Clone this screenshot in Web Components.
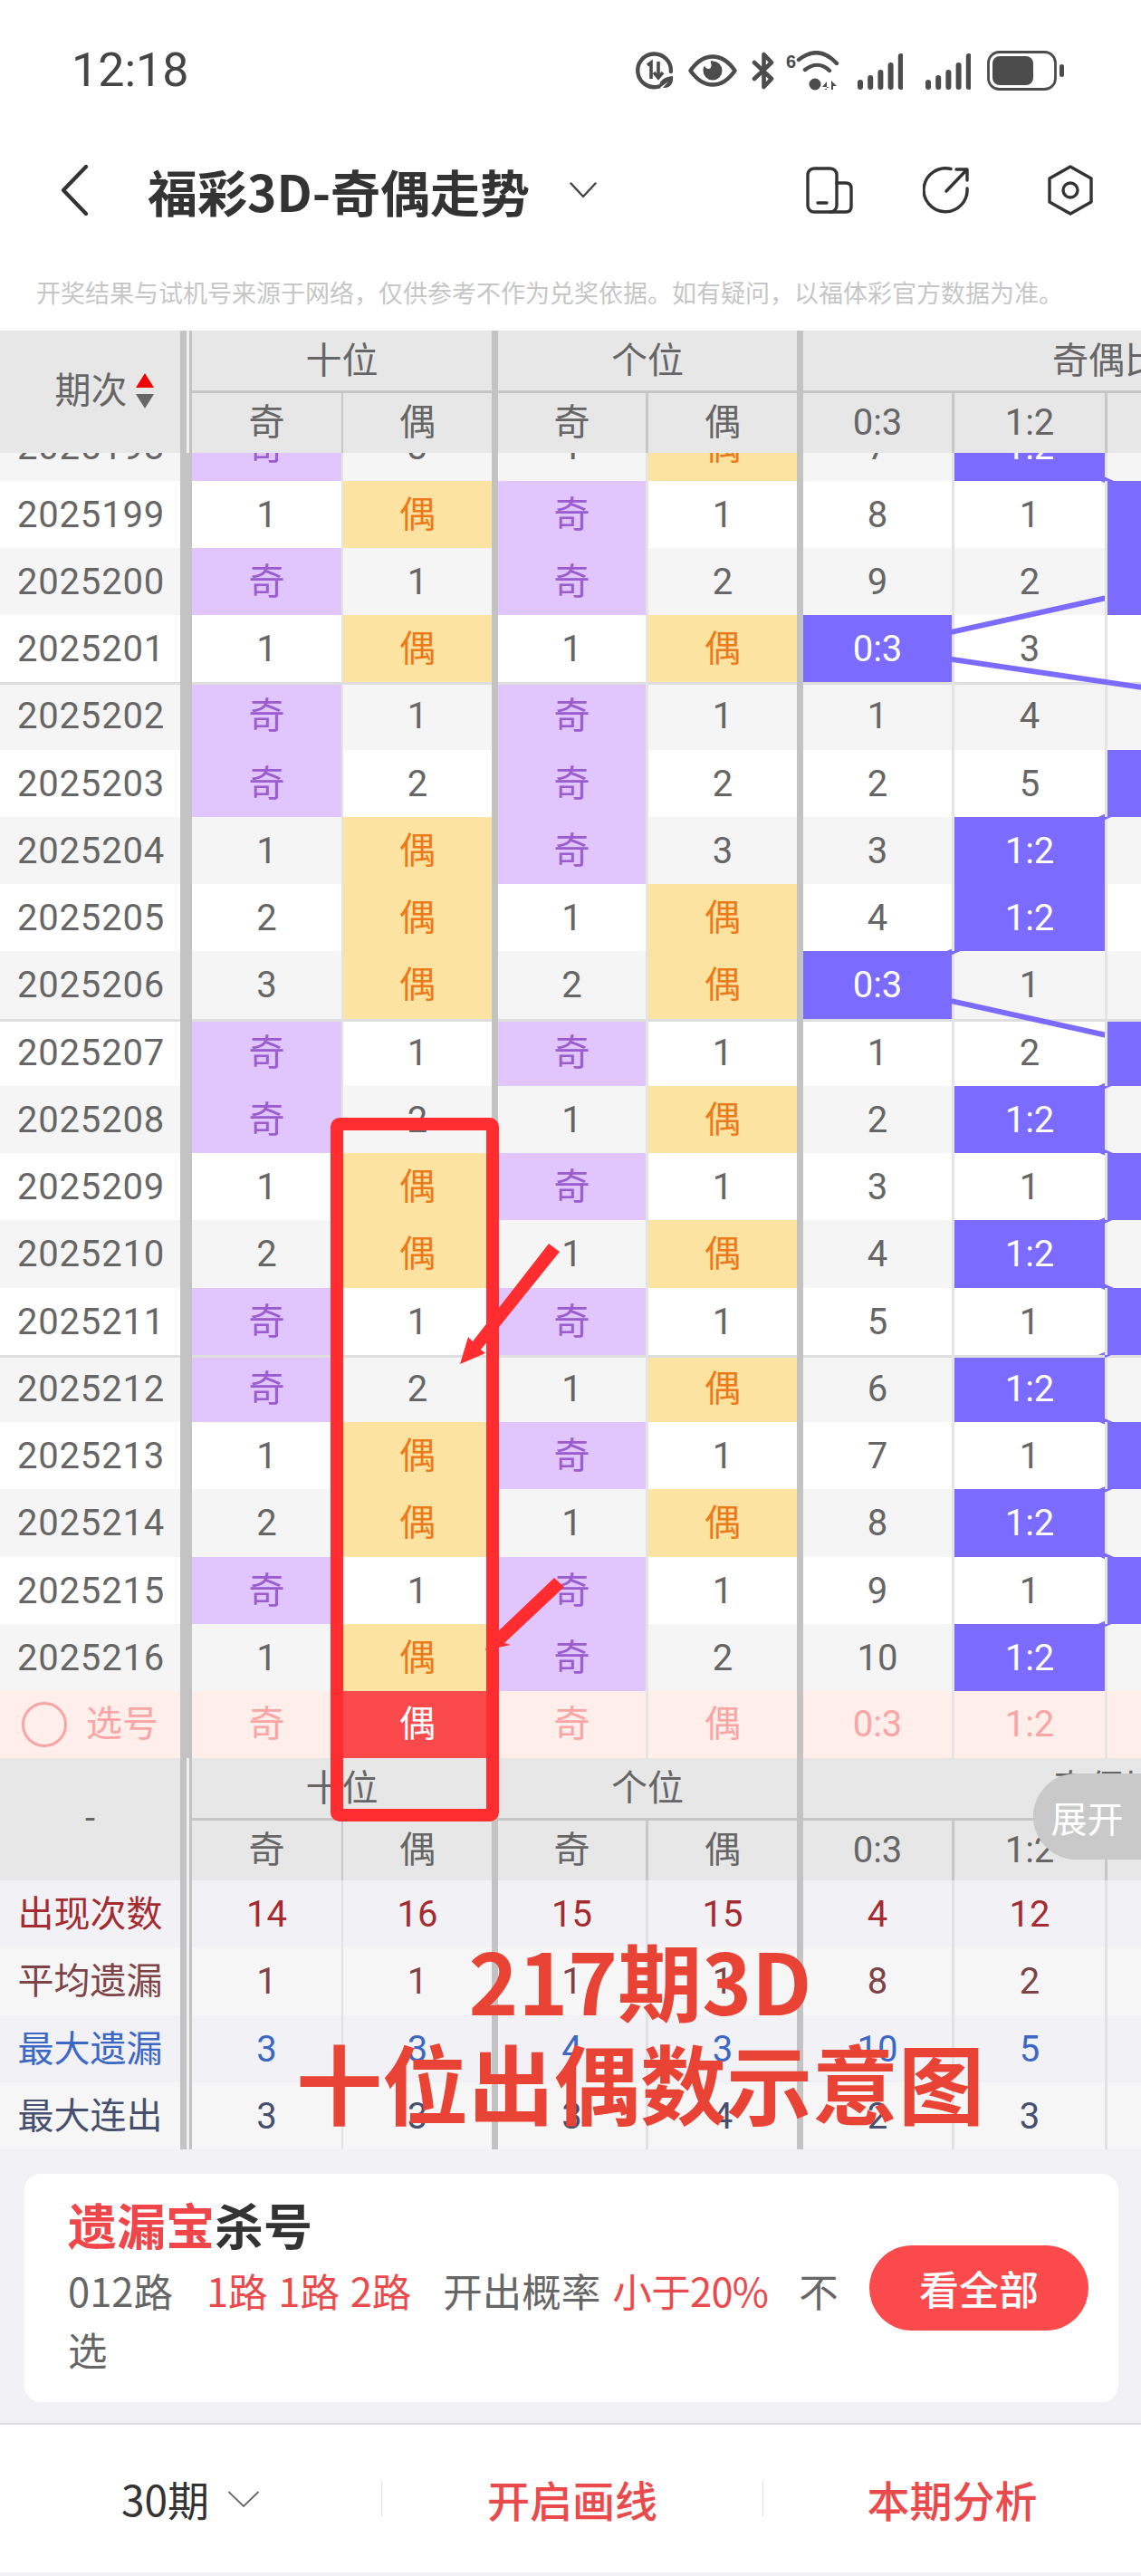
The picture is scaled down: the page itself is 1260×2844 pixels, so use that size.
<!DOCTYPE html>
<html lang="zh-CN">
<head>
<meta charset="utf-8">
<title>福彩3D-奇偶走势</title>
<style>
    html, body { margin: 0; padding: 0; }
    body {
        position: relative;
        width: 1260px;
        height: 2844px;
        overflow: hidden;
        background: #f1f1f6;
        font-family: Roboto, "Noto Sans CJK SC", sans-serif;
    }
</style>
</head>
<body>
<status-bar></status-bar>
<nav-bar>福彩3D-奇偶走势</nav-bar>
<notice-line>开奖结果与试机号来源于网络，仅供参考不作为兑奖依据。如有疑问，以福体彩官方数据为准。</notice-line>
<trend-table></trend-table>
<kill-card></kill-card>
<bottom-bar></bottom-bar>
<red-marks></red-marks>

<script>
/*
the table is one grid template used by all of its parts:
period | spine | then 2 cells per position | 4 cells for the ratio (2 of those are off screen).
cells carry their left separator as border-left, so the widths below include it.
*/
const COLS = '199px 13px 165px 166px 170px 167px 171px 169px 167px 170px'
const ROW_H = 74.25
const FIRST_TOP = -43.75    // row 2025198 is scrolled half under the header

// period, tens odd/even, ones odd/even, 0:3, 1:2, ratio cell that is hit (index into the 8 cells)
const ROWS = [
    ['2025198', '奇', '3', '1', '偶', '7', '1:2', 5],
    ['2025199', '1', '偶', '奇', '1', '8', '1', 6],
    ['2025200', '奇', '1', '奇', '2', '9', '2', 6],
    ['2025201', '1', '偶', '1', '偶', '0:3', '3', 4],
    ['2025202', '奇', '1', '奇', '1', '1', '4', 7],
    ['2025203', '奇', '2', '奇', '2', '2', '5', 6],
    ['2025204', '1', '偶', '奇', '3', '3', '1:2', 5],
    ['2025205', '2', '偶', '1', '偶', '4', '1:2', 5],
    ['2025206', '3', '偶', '2', '偶', '0:3', '1', 4],
    ['2025207', '奇', '1', '奇', '1', '1', '2', 6],
    ['2025208', '奇', '2', '1', '偶', '2', '1:2', 5],
    ['2025209', '1', '偶', '奇', '1', '3', '1', 6],
    ['2025210', '2', '偶', '1', '偶', '4', '1:2', 5],
    ['2025211', '奇', '1', '奇', '1', '5', '1', 6],
    ['2025212', '奇', '2', '1', '偶', '6', '1:2', 5],
    ['2025213', '1', '偶', '奇', '1', '7', '1', 6],
    ['2025214', '2', '偶', '1', '偶', '8', '1:2', 5],
    ['2025215', '奇', '1', '奇', '1', '9', '1', 6],
    ['2025216', '1', '偶', '奇', '2', '10', '1:2', 5],
]

const STATS = [
    ['出现次数', '#a42c30', '14', '16', '15', '15', '4', '12'],
    ['平均遗漏', '#7d4346', '1', '1', '1', '1', '8', '2'],
    ['最大遗漏', '#3c68c4', '3', '3', '4', '3', '10', '5'],
    ['最大连出', '#46506e', '3', '3', '3', '4', '2', '3'],
]

// left separator of each cell index (after period and spine)
const SEP = ['none', 'thin2', 'thick', 'thin', 'thick', 'thin', 'thin', 'thin']

class StatusBar extends HTMLElement {
    constructor() {
        super()
        this.attachShadow({ mode: 'open' })
        const bars = (x0) => [0, 1, 2, 3, 4].map(i => {
            const h = [11, 16, 22, 30, 40][i]
            return `<rect x="${x0 + i * 11.2}" y="${41 - h}" width="6" height="${h}" rx="3"/>`
        }).join('')
        this.shadowRoot.innerHTML = `<style>
    :host { display: flex; align-items: center; height: 156px; background: #fff; box-sizing: border-box; padding: 0 0 0 79px; color: #454545; }
    .time { font-size: 52px; font-weight: 400; line-height: 1; }
    .icons { display: flex; align-items: center; margin-left: auto; margin-right: 85px; }
    svg { display: block; fill: #4c4c4c; }
    .s { fill: none; stroke: #4c4c4c; }
    .count { font: 700 20px "Liberation Sans", sans-serif; }
</style>
<div class="time">12:18</div>
<div class="icons">
    <svg width="42" height="42" viewBox="0 0 42 42" style="margin-right:16px">
        <path class="s" stroke-width="4.4" stroke-linecap="round" d="M25 38.6A18.3 18.3 0 1 1 38.8 22"/>
        <path class="s" stroke-width="3.6" d="M13 15l4-3v18M25 11v17m-5-5l5 6 5-6"/>
        <path d="M26 41c-1-8 4-13 15-14 1 8-3 14-11 13l6-7-8 6z"/>
    </svg>
    <svg width="54" height="36" viewBox="0 0 54 36" style="margin-right:16px">
        <path class="s" stroke-width="4.4" stroke-linejoin="round" d="M2.5 18C10 7 18 2.500 27 2.500S44 7 51.500 18C44 29 36 33.500 27 33.500S10 29 2.500 18z"/>
        <path d="M27 7.500a10.500 10.500 0 0 1 0 21 10.500 10.500 0 0 1-10.500-10.500c0-2 .6-3.800 1.500-5.400 1 2.500 3 4 5 3.500 3-.7 3-4.500 1.600-8.300.8-.5 1.600-.8 2.400-.8z"/>
    </svg>
    <svg width="26" height="42" viewBox="0 0 26 42" style="margin-right:12px">
        <path class="s" stroke-width="4.600" stroke-linejoin="round" stroke-linecap="round" d="M3 12l19 18-8.500 9V3L22 12 3 30"/>
    </svg>
    <svg width="58" height="44" viewBox="0 0 58 44" style="margin-right:21px">
        <text class="count" x="0" y="19">6</text>
        <path class="s" stroke-width="4.400" stroke-linecap="round" d="M14 10C28-1 42-1 56 14M21 21c9-7 19-7 27 1"/>
        <circle cx="32" cy="37" r="6.500"/>
        <path d="M42 43h3V34l-5 6h8zM50 43V33l6 6h-4v4z"/>
    </svg>
    <svg width="50" height="41" viewBox="0 0 50 41" style="margin-right:25px">${bars(0)}</svg>
    <svg width="50" height="41" viewBox="0 0 50 41" style="margin-right:18px">${bars(0)}</svg>
    <svg width="85" height="44" viewBox="0 0 85 44">
        <rect class="s" x="1.500" y="1.500" width="74" height="41" rx="12" stroke-width="2.800"/>
        <rect x="6" y="6" width="45" height="32" rx="8"/>
        <rect x="80" y="15" width="5" height="14" rx="2.500"/>
    </svg>
</div>`
    }
}

class NavBar extends HTMLElement {
    constructor() {
        super()
        this.attachShadow({ mode: 'open' })
        this.shadowRoot.innerHTML = `<style>
    :host { display: flex; align-items: center; height: 108px; background: #fff; padding-left: 66px; }
    svg { display: block; flex: none; fill: none; stroke: #333; stroke-linecap: round; stroke-linejoin: round; }
    .title { margin-left: 65px; font-size: 55px; font-weight: 700; color: #333; white-space: nowrap; line-height: 1; font-family: "Noto Sans CJK SC", sans-serif; }
    .tools { display: flex; align-items: center; margin-left: auto; margin-right: 52px; }
</style>
<svg width="32" height="56" viewBox="0 0 32 56" stroke-width="4.200"><path d="M29 2L4 28l25 26"/></svg>
<div class="title"><slot></slot></div>
<svg width="30" height="18" viewBox="0 0 30 18" stroke-width="2.400" style="margin-left:44px;stroke:#444"><path d="M1.500 1.500L15 16 28.500 1.500"/></svg>
<div class="tools">
    <svg width="52" height="52" viewBox="0 0 52 52" stroke-width="3.400" style="margin-right:77px">
        <rect x="2" y="2" width="32" height="48" rx="7"/>
        <path d="M34 18h10c4 0 6 2 6 6v20c0 4-2 6-6 6H27M13 40h10"/>
    </svg>
    <svg width="52" height="52" viewBox="0 0 52 52" stroke-width="3.400" style="margin-right:85px">
        <path d="M31 2.500A24 24 0 1 0 49 24"/>
        <path d="M26 27L49 3M37 3h12v12"/>
    </svg>
    <svg width="52" height="56" viewBox="0 0 52 56" stroke-width="3.400">
        <path d="M26 2l23 13v26L26 54 3 41V15z"/>
        <circle cx="26" cy="28" r="8"/>
    </svg>
</div>`
    }
}

class NoticeLine extends HTMLElement {
    constructor() {
        super()
        this.attachShadow({ mode: 'open' })
        this.shadowRoot.innerHTML = `<style>
    :host { display: block; height: 101px; box-sizing: border-box; background: #fff; padding: 41px 0 0 40px; font-size: 27px; line-height: 40px; color: #c6c6c6; white-space: nowrap; }
</style><slot></slot>`
    }
}

class TrendTable extends HTMLElement {
    constructor() {
        super()
        this.attachShadow({ mode: 'open' })
        this.shadowRoot.innerHTML = `<style>
    :host { display: block; width: 1260px; height: 2008px; overflow: hidden; color: #666; font-size: 40px; }
    .grid { display: grid; grid-template-columns: ${COLS}; width: 1557px; }
    .cell { display: flex; align-items: center; justify-content: center; box-sizing: border-box; min-width: 0; white-space: nowrap; line-height: 1; }

    /* separators */
    .thin2 { border-left: 2px solid var(--thin); }
    .thin { border-left: 3px solid var(--thin); }
    .thick { border-left: 7px solid #c3c3c3; }
    .spine { background: #c3c3c3; }
    .spine.split { background: linear-gradient(to right, #c3c3c3 7px, #efefef 7px, #efefef 10px, #c3c3c3 10px); }

    /* header and its copy under the rows */
    .head { --thin: #c8c8c8; background: #e7e7e7; grid-template-rows: 69px 66px; }
    .head .period { grid-row: 1 / span 2; gap: 9px; padding-bottom: 2px; }
    .head .sorted { padding-left: 31px; }
    .head .spine { grid-row: 1 / span 2; }
    .head .group { height: 69px; border-bottom: 3px solid #c6c6c6; padding-top: 2px; }
    .head .g1 { grid-column: 3 / span 2; }
    .head .g2 { grid-column: 5 / span 2; }
    .head .g3 { grid-column: 7 / span 4; }
    .sort { display: flex; flex-direction: column; gap: 7px; }
    .sort i { display: block; width: 0; height: 0; border-left: 10px solid transparent; border-right: 10px solid transparent; }
    .sort .up { border-bottom: 16px solid #f00000; }
    .sort .down { border-top: 16px solid #666; }

    /* the scrolled rows */
    .body { height: 1441px; overflow: hidden; }
    .scroll { position: relative; margin-top: ${FIRST_TOP}px; }
    .rows { --thin: #e4e4e4; }
    .rows .row { height: ${ROW_H}px; }
    .rows .cell, .stat .cell { padding-top: 2px; }
    .zebra0 { background: #f5f5f5; }
    .zebra1 { background: #fff; }
    .period-no { letter-spacing: .8px; padding-left: 2px; }
    .cut { box-shadow: inset 0 3px 0 #dedede; }
    .odd { background: #e0c6fd; color: #9a5ccf; }
    .even { background: #fde3a1; color: #ec7a1a; }
    .hit { background: #7b6bff; color: #fff; position: relative; z-index: 2; }
    .lines { position: absolute; left: 0; top: 0; z-index: 1; }

    /* pick row */
    .pick { background: #ffeee9; color: #f9a5a5; height: 74px; --thin: #e8e4e2; }
    .pick .period { gap: 21px; }
    .ring { width: 50px; height: 50px; box-sizing: border-box; border: 3px solid #f9a5a5; border-radius: 50%; }
    .pick .chosen { background: #fb4a4c; color: #fff; }

    .stat { height: 74.25px; --thin: #e2e2e6; }
    .stat0 { background: #f1f1f6; }
    .stat1 { background: #f6f6f7; }

    .pill { position: absolute; right: 0; top: 1593px; width: 119px; height: 95px; border-radius: 48px 0 0 48px; background: #c9c9c9; color: #fff; font-size: 40px; display: flex; align-items: center; justify-content: center; box-sizing: border-box; }
    .wrap { position: relative; }
</style>
<div class="wrap">
    ${this.#head(true)}
    <div class="body">
        <div class="scroll">
            <div class="rows">${ROWS.map((r, i) => this.#row(r, i)).join('')}</div>
            ${this.#lines()}
            ${this.#pick()}
        </div>
    </div>
    ${this.#head(false)}
    ${STATS.map((s, i) => this.#stat(s, i)).join('')}
    <div class="pill">展开</div>
</div>`
    }

    #head(top) {
        const left = top
            ? `<div class="cell period sorted">期次<span class="sort"><i class="up"></i><i class="down"></i></span></div>`
            : `<div class="cell period">-</div>`
        return `<div class="grid head">
    ${left}
    <div class="spine split"></div>
    <div class="cell group g1">十位</div>
    <div class="cell group g2 thick">个位</div>
    <div class="cell group g3 thick">奇偶比</div>
    <div class="cell">奇</div>
    <div class="cell thin2">偶</div>
    <div class="cell thick">奇</div>
    <div class="cell thin">偶</div>
    <div class="cell thick">0:3</div>
    <div class="cell thin">1:2</div>
    <div class="cell thin"></div>
    <div class="cell thin"></div>
</div>`
    }

    #row(r, i) {
        const cut = (i > 0 && (i - 4) % 5 === 0) ? ' cut' : ''
        const cells = [r[1], r[2], r[3], r[4], r[5], r[6], '', ''].map((v, k) => {
            let kind = ''
            if (v === '奇') kind = 'odd'
            if (v === '偶') kind = 'even'
            if (k === r[7]) kind = 'hit'
            return `<div class="cell ${SEP[k]} ${kind}${cut}">${v}</div>`
        }).join('')
        return `<div class="grid row zebra${i % 2}">
    <div class="cell period period-no${cut}">${r[0]}</div>
    <div class="spine"></div>
    ${cells}
</div>`
    }

    // the line runs through the centers of the hit cells
    #lines() {
        const cx = { 4: 969, 5: 1137, 6: 1305, 7: 1472 }
        const pts = ROWS.map((r, i) => `${cx[r[7]]},${(i + .5) * ROW_H}`).join(' ')
        return `<svg class="lines" width="1557" height="${ROWS.length * ROW_H}">
    <polyline points="${pts}" fill="none" stroke="#7b6bff" stroke-width="6"/>
</svg>`
    }

    #pick() {
        const vals = ['奇', '偶', '奇', '偶', '0:3', '1:2', '', '']
        return `<div class="grid pick">
    <div class="cell period"><span class="ring"></span>选号</div>
    <div class="spine"></div>
    ${vals.map((v, k) => `<div class="cell ${SEP[k]}${k === 1 ? ' chosen' : ''}">${v}</div>`).join('')}
</div>`
    }

    #stat(s, i) {
        const vals = s.slice(2).concat(['', ''])
        return `<div class="grid stat stat${i % 2}" style="color:${s[1]}">
    <div class="cell">${s[0]}</div>
    <div class="spine split"></div>
    ${vals.map((v, k) => `<div class="cell ${SEP[k]}">${v}</div>`).join('')}
</div>`
    }
}

class KillCard extends HTMLElement {
    constructor() {
        super()
        this.attachShadow({ mode: 'open' })
        this.shadowRoot.innerHTML = `<style>
    :host { display: block; box-sizing: border-box; height: 304px; padding: 27px 25px 0 27px; background: #f1f1f6; border-bottom: 2px solid #dcdcdc; }
    .card { display: flex; align-items: center; height: 252px; box-sizing: border-box; padding: 0 33px 0 48px; background: #fff; border-radius: 18px; font-family: "Noto Sans CJK SC", sans-serif; }
    .text { width: 864px; flex: none; }
    .title { font-size: 54px; font-weight: 700; line-height: 60px; color: #333; }
    .title b { color: #f0464a; font-weight: 700; }
    .desc { margin-top: 10px; font-size: 43.500px; line-height: 65px; color: #666; }
    .desc em { font-style: normal; color: #ea4a4c; }
    .roads { margin-left: 37px; word-spacing: 2px; }
    .rate { margin-left: 35px; }
    .less { margin-left: 13px; letter-spacing: -.7px; }
    .not { margin-left: 34px; }
    button { margin-left: auto; width: 242px; height: 94px; border: 0; padding: 0; border-radius: 47px; background: #fb4a4c; color: #fff; font: 500 44px "Noto Sans CJK SC", sans-serif; }
</style>
<div class="card">
    <div class="text">
        <div class="title"><b>遗漏宝</b>杀号</div>
        <div class="desc">012路<em class="roads">1路 1路 2路</em><span class="rate">开出概率</span><em class="less">小于20%</em><span class="not">不选</span></div>
    </div>
    <button>看全部</button>
</div>`
    }
}

class BottomBar extends HTMLElement {
    constructor() {
        super()
        this.attachShadow({ mode: 'open' })
        this.shadowRoot.innerHTML = `<style>
    :host { display: grid; grid-template-columns: 421px 421px 418px; align-items: center; height: 163px; background: #fff; font-family: "Noto Sans CJK SC", sans-serif; }
    .tab { display: flex; align-items: center; justify-content: center; gap: 20px; height: 41px; font-size: 47px; line-height: 41px; font-weight: 500; color: #ea4a4c; white-space: nowrap; }
    .tab + .tab { border-left: 1px solid #e2e2e2; }
    .count { color: #333; font-size: 46px; font-weight: 400; }
    svg { display: block; fill: none; stroke: #666; stroke-width: 1.800; }
</style>
<div class="tab count">30期<svg width="36" height="20" viewBox="0 0 36 20"><path d="M1.500 2L18 18 34.500 2"/></svg></div>
<div class="tab">开启画线</div>
<div class="tab">本期分析</div>`
    }
}

// the hand drawn marks on top of the screenshot
class RedMarks extends HTMLElement {
    constructor() {
        super()
        this.attachShadow({ mode: 'open' })
        this.shadowRoot.innerHTML = `<style>
    :host { display: block; position: absolute; left: 0; top: 0; width: 1260px; height: 2844px; pointer-events: none; z-index: 5; }
    svg { position: absolute; left: 0; top: 0; }
    .big { position: absolute; left: 0; width: 1414px; text-align: center; color: #e94335; font: 700 93px/110px "Noto Sans CJK SC", sans-serif; white-space: nowrap; }
</style>
<svg width="1260" height="2844" fill="#ff2d30">
    <rect x="372" y="1241" width="172" height="763" rx="3" fill="none" stroke="#ff2d30" stroke-width="14"/>
    <path d="M606 1373l12 9-87 108 5 4-28 12 9-30 5 5z"/>
    <path d="M612 1742l11 10-66 62 7 2-28 6 8-25 4 6z"/>
</svg>
<div class="big" style="top:2130px">217期3D</div>
<div class="big" style="top:2243px;font-size:95px">十位出偶数示意图</div>`
    }
}

customElements.define('status-bar', StatusBar)
customElements.define('nav-bar', NavBar)
customElements.define('notice-line', NoticeLine)
customElements.define('trend-table', TrendTable)
customElements.define('kill-card', KillCard)
customElements.define('bottom-bar', BottomBar)
customElements.define('red-marks', RedMarks)
</script>
</body>
</html>
